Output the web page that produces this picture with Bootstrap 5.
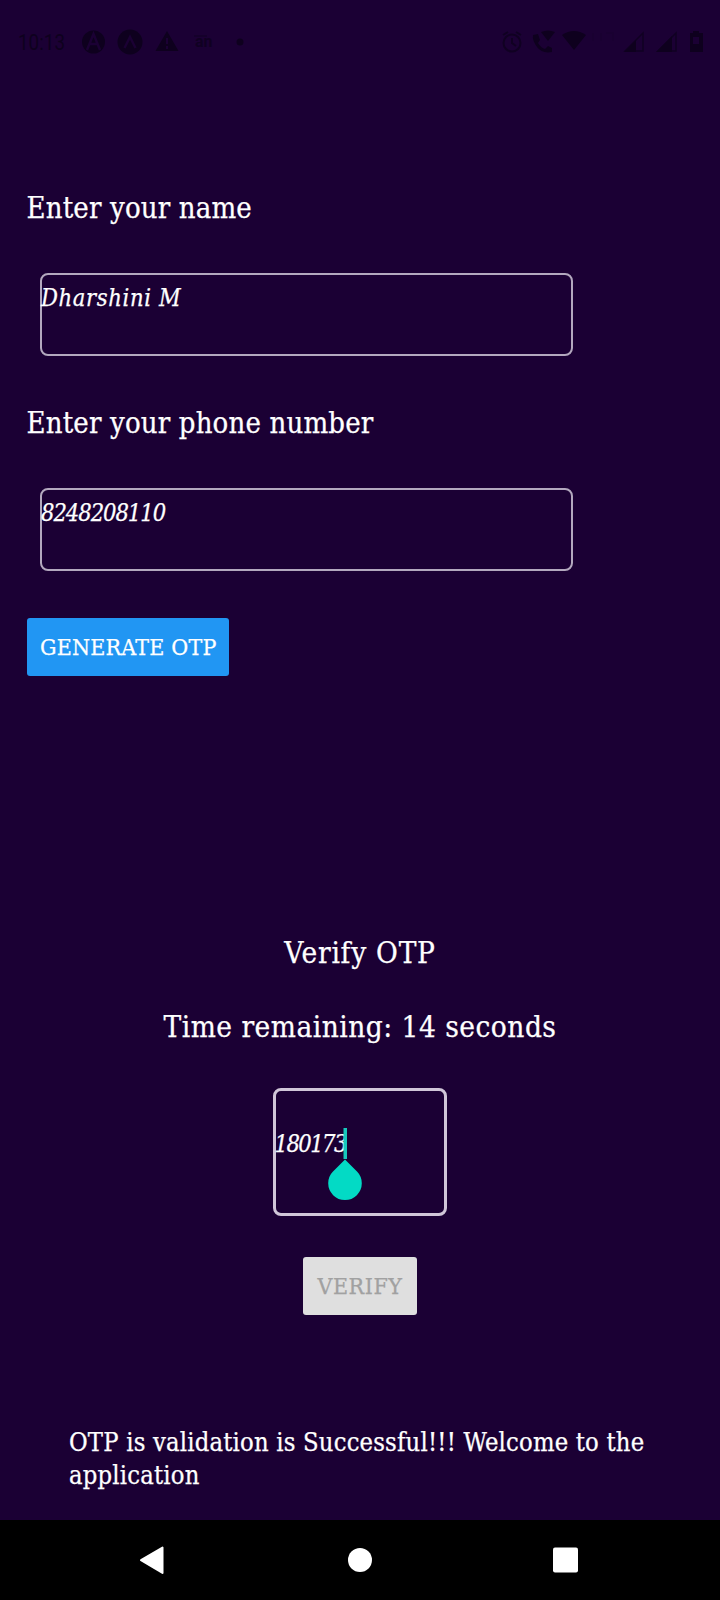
<!DOCTYPE html>
<html lang="en">
<head>
<meta charset="utf-8">
<meta name="viewport" content="width=device-width, initial-scale=1">
<title>Verify OTP</title>
<link rel="stylesheet" href="https://cdn.jsdelivr.net/npm/bootstrap@5.3.0/dist/css/bootstrap.min.css">
<style>
body{background:#1b0034;color:#fff;font-family:"Roboto Slab","DejaVu Serif Condensed","DejaVu Serif",serif;-webkit-text-stroke:.25px currentColor}
.screen{height:1600px;overflow:hidden}
.status{height:84px;color:#0e001e;-webkit-text-stroke:0}
.prompt{font-size:29px;line-height:40px;letter-spacing:.16px;font-weight:400;margin:0}
.prompt-wide{font-size:29.5px;letter-spacing:.48px}
.prompt-title{letter-spacing:.75px}
.field{width:533px;height:83px;margin:45px 0 47px 13.5px;padding:11px 0 0;border:2px solid #b3a8be;border-radius:8px;color:#fff;font-size:23.5px;line-height:24px;font-style:italic;letter-spacing:.64px;text-indent:-1px}
.digits{letter-spacing:-1.04px}
.otp-field{width:174px;height:128px;margin-top:41px;padding:41px 0 0;border:3px solid #d0c6d8;border-radius:8px;font-size:23.5px;line-height:24px;font-style:italic;letter-spacing:-1.55px}
.otp-text{margin-left:-1.5px}
.handle{left:51px;top:37px}
.btn-app{height:58px;border:0;border-radius:3px;padding:0;font-size:23px;line-height:59px;-webkit-text-stroke:.25px currentColor}
.btn-generate{width:202.5px;background:#2196f3;color:#fff;letter-spacing:.2px;text-indent:1px}
.btn-verify{width:114px;margin-top:41px;letter-spacing:.53px}
.btn-verify:disabled{background:#dfdfdf;color:#a1a1a1;opacity:1}
.form-area{padding:104px 0 0 26.5px;height:849px}
.countdown{margin-top:34px}
.message{margin:111px 0 0 69px;font-size:25.3px;line-height:33px;letter-spacing:.2px}
.sysnav{height:80px}
</style>
</head>
<body>
<div class="screen d-flex flex-column">
  <header class="status d-flex align-items-center flex-shrink-0">
    <svg width="720" height="84" fill="currentColor">
      <text x="18" y="50" font-family="Roboto,sans-serif" font-size="22" textLength="47" lengthAdjust="spacingAndGlyphs">10:13</text>
      <circle cx="93.500" cy="42" r="11.500"/>
      <path d="M87 50l6.500-16 6.500 16M90 44h7" fill="none" stroke="#1b0034" stroke-width="2.400"/>
      <circle cx="130" cy="42" r="12.500"/>
      <path d="M124.500 48l5.500-11 5.500 11" fill="none" stroke="#1b0034" stroke-width="2.400"/>
      <path d="M167 31l11.500 20h-23z"/>
      <path d="M167 38v6M167 46v3" stroke="#1b0034" stroke-width="2"/>
      <g opacity=".8"><text x="195" y="47" font-family="Roboto,sans-serif" font-size="16" font-weight="700">an</text><path d="M194 36h13" stroke="currentColor"/></g>
      <circle cx="240" cy="42" r="3.500"/>
      <g fill="none" stroke="currentColor" stroke-width="2" opacity=".8"><circle cx="512" cy="43" r="8.500"/><path d="M512 38v5l4 3M503 35l5-3M521 35l-5-3"/></g>
      <path d="M533 35l5-1 2 6-2 3q3 5 7 6l3-3 4 2v4q-10 2-15-5t-4-12z"/>
      <path d="M541 32q7-3 14 0l-7 9z"/>
      <path d="M562 35q12-8 24 0l-12 15z"/>
      <g opacity=".12"><path d="M593 33v8M601 33v8M606 33h7v8" fill="none" stroke="currentColor" stroke-width="2"/></g>
      <path d="M625 51l18-18v18z" fill="none" stroke="currentColor" stroke-width="1.500" opacity=".8"/><path d="M624 52l12-12v12z"/>
      <path d="M658 51l18-18v18z" fill="none" stroke="currentColor" stroke-width="1.500" opacity=".8"/><path d="M656 52l16-16v16z"/>
      <path fill-rule="evenodd" d="M690 33h3v-2h6v2h4v19h-13zM693 37v7h6v-7z"/>
    </svg>
  </header>

  <main class="flex-grow-1">
    <section class="form-area">
      <h1 class="prompt">Enter your name</h1>
      <div class="field">Dharshini M</div>
      <h2 class="prompt">Enter your phone number</h2>
      <div class="field digits">8248208110</div>
      <button type="button" class="btn btn-app btn-generate">GENERATE OTP</button>
    </section>

    <section class="d-flex flex-column align-items-center">
      <h2 class="prompt prompt-wide prompt-title">Verify OTP</h2>
      <p class="prompt prompt-wide countdown">Time remaining: 14 seconds</p>
      <div class="otp-field position-relative">
        <div class="otp-text">180173</div>
        <svg class="handle position-absolute" width="36" height="74" viewBox="0 0 36 74">
          <path d="M16.500 0h3.500v31h-3.500z" fill="#17c9bd"/>
          <path d="M18 31.500L30 43.500A16.800 16.800 0 1 1 6 43.500Z" fill="#03dac5"/>
        </svg>
      </div>
      <button type="button" class="btn btn-app btn-verify" disabled>VERIFY</button>
    </section>

    <p class="message">OTP is validation is Successful!!! Welcome to the<br>application</p>
  </main>

  <nav class="sysnav bg-black flex-shrink-0">
    <svg width="720" height="80" fill="#fff">
      <path d="M162.500 27.500v25.500l-21.500-12.800z" stroke="#fff" stroke-width="2" stroke-linejoin="round"/>
      <circle cx="360" cy="40" r="12"/>
      <rect x="553" y="27.500" width="25" height="25" rx="2"/>
    </svg>
  </nav>
</div>
<script src="https://cdn.jsdelivr.net/npm/bootstrap@5.3.0/dist/js/bootstrap.bundle.min.js"></script>
</body>
</html>
